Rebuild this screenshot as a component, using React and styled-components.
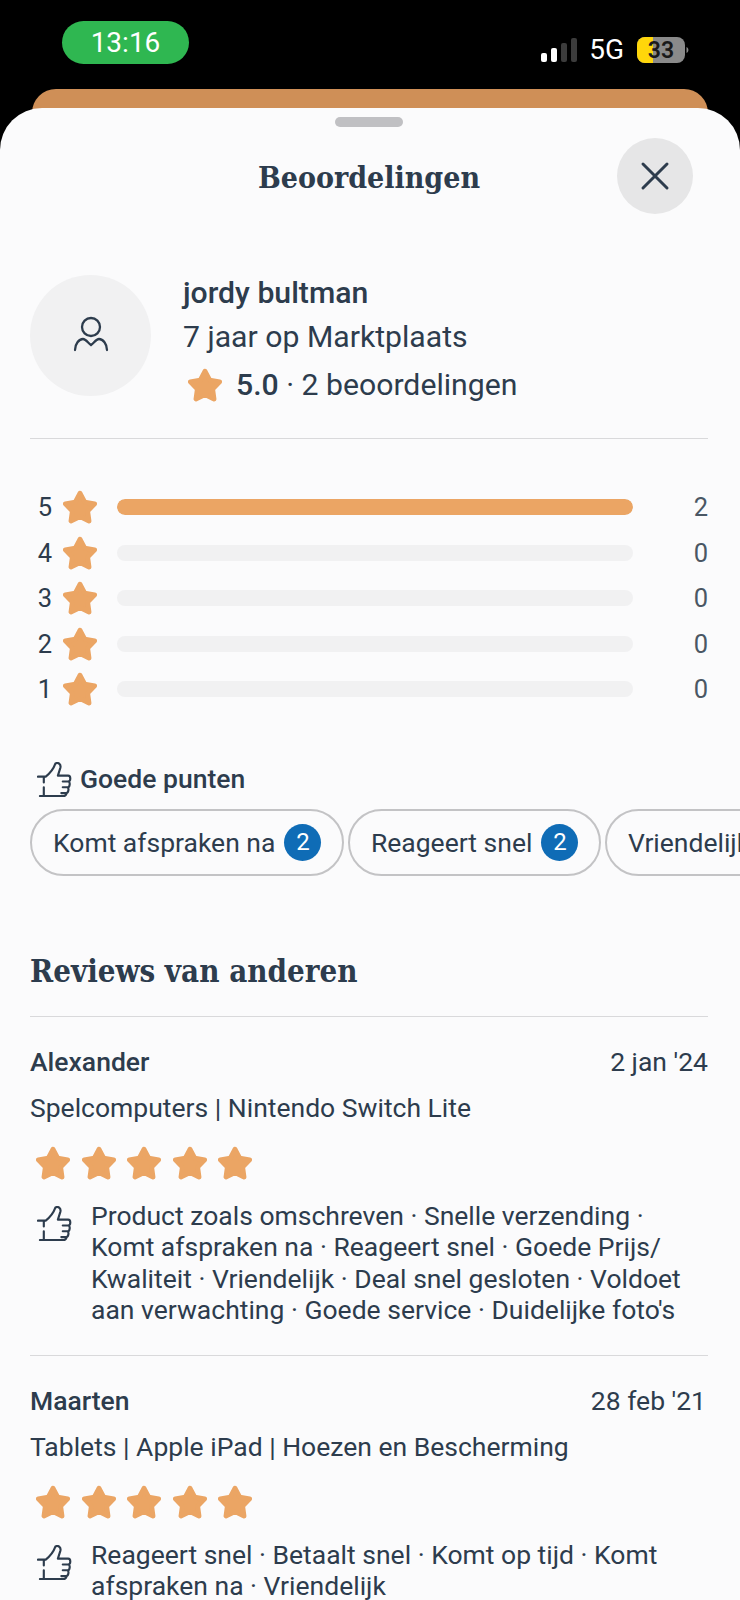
import React from "react";
import styled, { createGlobalStyle } from "styled-components";

const Global = createGlobalStyle`
  html, body { margin: 0; padding: 0; background: #000; }
  body { width: 740px; height: 1600px; overflow: hidden; font-family: Roboto, "Liberation Sans", sans-serif; color: #2d3c4d; }
`;
const Screen = styled.div`width: 740px; height: 1600px; overflow: hidden; background: #000; display: flex; flex-direction: column;`;
const StatusBar = styled.div`height: 89px; flex: none; display: flex; justify-content: space-between; align-items: flex-start; padding: 0 50px 0 62px; box-sizing: border-box;`;
const Clock = styled.div`margin-top: 21px; width: 127px; height: 43px; border-radius: 22px; background: #2fb751; color: #fff; font: 400 28px/43px Roboto, sans-serif; text-align: center;`;
const StatusRight = styled.div`margin-top: 36px; display: flex; align-items: center; height: 28px;`;
const Net = styled.span`color: #fff; font: 400 28px/28px Roboto, sans-serif; margin: 0 13px 0 12px;`;
const BackCard = styled.div`flex: none; height: 40px; margin: 0 32px; background: #cf8f57; border-radius: 24px 24px 0 0;`;
const Sheet = styled.div`flex: 1; margin-top: -21px; position: relative; background: #fbfbfc; border-radius: 42px 42px 0 0; padding: 0 32px 0 30px; overflow: hidden;`;
const Handle = styled.div`width: 68px; height: 10px; border-radius: 5px; background: #c0c0c3; margin: 9px auto 0;`;
const Header = styled.div`height: 102px; margin-top: 3px; display: flex; align-items: center; justify-content: center; position: relative;`;
const Title = styled.h1`margin: 0; font: 700 30px/40px "DejaVu Serif Condensed", "DejaVu Serif", serif; color: #2d3c4d; padding-bottom: 6px;`;
const CloseButton = styled.button`position: absolute; right: 15px; top: 8px; width: 76px; height: 76px; border: 0; border-radius: 50%; background: #e6e6e7; display: flex; align-items: center; justify-content: center; padding: 0;`;
const Profile = styled.section`display: flex; gap: 31px; margin-top: 43px; padding-bottom: 27px; border-bottom: 1px solid #d9d9db;`;
const Avatar = styled.div`width: 121px; height: 121px; flex: none; box-sizing: border-box; padding-bottom: 3px; border-radius: 50%; background: #f1f1f2; display: flex; align-items: center; justify-content: center;`;
const ProfileText = styled.div`display: flex; flex-direction: column; margin: -4px 0 0 1px;`;
const Name = styled.div`font: 500 30.200px/44px Roboto, sans-serif;`;
const Line = styled.div`font: 400 30.200px/43px Roboto, sans-serif;`;
const RatingLine = styled.div`font: 400 30.200px/53px Roboto, sans-serif; display: flex; align-items: center; gap: 14px; margin-left: 5px;`;
const Strong = styled.b`font-weight: 500;`;
const Bars = styled.section`margin-top: 48px; display: flex; flex-direction: column; gap: 5.500px;`;
const BarRow = styled.div`display: grid; grid-template-columns: 22px 65px 516px 1fr; align-items: center; height: 40px; font: 400 25.500px/40px Roboto, sans-serif;`;
const BarNum = styled.span`text-align: right;`;
const StarCell = styled.span`display: flex; padding-left: 11px;`;
const Track = styled.div`height: 16px; border-radius: 8px; background: #f1f1f2; overflow: hidden;`;
const Fill = styled.div`height: 100%; background: #eba564; border-radius: 8px;`;
const Count = styled.span`text-align: right; color: #4a5764;`;
const GoodHead = styled.div`margin-top: 50px; display: flex; align-items: center; gap: 8px; margin-left: 7px; font: 500 26.500px/40px Roboto, sans-serif;`;
const Chips = styled.div`margin-top: 10px; display: flex; gap: 3.500px; margin-right: -32px; overflow: hidden;`;
const Chip = styled.div`flex: none; display: flex; align-items: center; gap: 9px; height: 67px; box-sizing: border-box; padding: 0 21px; border: 2px solid #c3c3c5; border-radius: 33.500px; font: 400 26.500px/32px Roboto, sans-serif;`;
const Badge = styled.span`width: 37px; height: 37px; border-radius: 50%; background: #0f6cb6; color: #fff; font: 400 24px/37px Roboto, sans-serif; text-align: center;`;
const SectionTitle = styled.h2`margin: 75px 0 0; font: 700 31px/40px "DejaVu Serif Condensed", "DejaVu Serif", serif; padding-bottom: 25px; border-bottom: 1px solid #d9d9db;`;
const Review = styled.article`padding: 27px 0 30px; border-bottom: 1px solid #d9d9db; &:last-child { border-bottom: 0; }`;
const ReviewTop = styled.div`display: flex; justify-content: space-between; align-items: center; font: 400 26.500px/36px Roboto, sans-serif;`;
const Author = styled.span`font-weight: 500;`;
const ReviewDate = styled.span`padding-right: ${(p) => p.$inset || 0}px;`;
const Category = styled.div`margin-top: 10px; font: 400 26.500px/36px Roboto, sans-serif;`;
const Stars = styled.div`margin-top: 20px; display: flex; gap: 11.600px; margin-left: 6px;`;
const Tags = styled.div`margin-top: 20px; display: flex; gap: 19px; margin-left: 7px;`;
const ThumbSlot = styled.span`flex: none; padding-top: 6px;`;
const TagText = styled.p`margin: 0; font: 400 26.500px/31.300px Roboto, sans-serif; flex: 1;`;

const Star = () => (
  <svg width="34" height="34" viewBox="2 2 32 32" style={{ flex: "none", display: "block" }}>
    <path d="M18 5 L22.47 13.35 L31.79 15.02 L25.23 21.85 L26.52 31.23 L18 27.1 L9.48 31.23 L10.77 21.85 L4.21 15.02 L13.53 13.35 Z" fill="#eba564" stroke="#eba564" strokeWidth="4.5" strokeLinejoin="round" />
  </svg>
);
const Thumb = () => (
  <svg width="35" height="35" viewBox="0 0 36 36" fill="none" stroke="#2d3c4d" strokeWidth="2.200" strokeLinecap="round" strokeLinejoin="round" style={{ flex: "none", display: "block" }}>
    <path d="M1 15 H9 C13 12 17 7 19 1.500 C22 0 25 2.500 24 6 L21.500 14 H32 C35 14 35 20 32 20 H26.500 M32 20 C34.500 20 34 26 31.500 26 H26.500 M31.500 26 C33 27 32.500 32 30 32 H25 M30 32 C30.500 33 29.500 35 27.500 35 H3 M7 15 V21 M7 26 V35" />
  </svg>
);
const Person = () => (
  <svg width="36" height="36" viewBox="0 0 36 36" fill="none" stroke="#2d3c4d" strokeWidth="2.300" strokeLinecap="round">
    <circle cx="18" cy="11" r="9" />
    <path d="M2 34 C2 28 6 23 10 23 C13 23 15 27 18 29 C21 27 23 23 26 23 C30 23 34 28 34 34" />
  </svg>
);
const Signal = () => (
  <svg width="36" height="24" viewBox="0 0 36 24"><rect x="0" y="15" width="6" height="9" rx="2" fill="#fff"/><rect x="10" y="10" width="6" height="14" rx="2" fill="#fff"/><rect x="20" y="5" width="6" height="19" rx="2" fill="#3c3c3c"/><rect x="30" y="0" width="6" height="24" rx="2" fill="#3c3c3c"/></svg>
);
const Battery = () => (
  <svg width="53" height="26" viewBox="0 0 53 26"><defs><clipPath id="bc"><rect width="48" height="26" rx="8"/></clipPath></defs><g clipPath="url(#bc)"><rect width="48" height="26" fill="#8a8a8a"/><rect width="16" height="26" fill="#ffd60a"/></g><path d="M49.500 10 C52 11 52 15 49.500 16 Z" fill="#8a8a8a"/><text x="24" y="20.500" textAnchor="middle" fontFamily="Roboto, sans-serif" fontWeight="600" fontSize="23" fill="#1a1a1a">33</text></svg>
);

const bars = [[5, 2], [4, 0], [3, 0], [2, 0], [1, 0]];
const reviews = [
  { name: "Alexander", date: "2 jan '24", cat: "Spelcomputers | Nintendo Switch Lite", tags: ["Product zoals omschreven · Snelle verzending ·", "Komt afspraken na · Reageert snel · Goede Prijs/", "Kwaliteit · Vriendelijk · Deal snel gesloten · Voldoet", "aan verwachting · Goede service · Duidelijke foto's"] },
  { name: "Maarten", date: "28 feb '21", inset: 2, cat: "Tablets | Apple iPad | Hoezen en Bescherming", tags: ["Reageert snel · Betaalt snel · Komt op tijd · Komt", "afspraken na · Vriendelijk"] },
];

export default function App() {
  return (
    <Screen>
      <Global />
      <StatusBar>
        <Clock>13:16</Clock>
        <StatusRight><Signal /><Net>5G</Net><Battery /></StatusRight>
      </StatusBar>
      <BackCard />
      <Sheet>
        <Handle />
        <Header>
          <Title>Beoordelingen</Title>
          <CloseButton aria-label="Sluiten">
            <svg width="32" height="32" viewBox="0 0 32 32" stroke="#2d3c4d" strokeWidth="3" strokeLinecap="round"><path d="M4 4 L28 28 M28 4 L4 28" /></svg>
          </CloseButton>
        </Header>
        <Profile>
          <Avatar><Person /></Avatar>
          <ProfileText>
            <Name>jordy bultman</Name>
            <Line>7 jaar op Marktplaats</Line>
            <RatingLine><Star /><span><Strong>5.0</Strong> · 2 beoordelingen</span></RatingLine>
          </ProfileText>
        </Profile>
        <Bars>
          {bars.map(([n, c]) => (
            <BarRow key={n}>
              <BarNum>{n}</BarNum>
              <StarCell><Star /></StarCell>
              <Track>{c > 0 && <Fill style={{ width: "100%" }} />}</Track>
              <Count>{c}</Count>
            </BarRow>
          ))}
        </Bars>
        <GoodHead><Thumb />Goede punten</GoodHead>
        <Chips>
          <Chip>Komt afspraken na<Badge>2</Badge></Chip>
          <Chip>Reageert snel<Badge>2</Badge></Chip>
          <Chip>Vriendelijk<Badge>2</Badge></Chip>
        </Chips>
        <SectionTitle>Reviews van anderen</SectionTitle>
        {reviews.map((r) => (
          <Review key={r.name}>
            <ReviewTop><Author>{r.name}</Author><ReviewDate $inset={r.inset}>{r.date}</ReviewDate></ReviewTop>
            <Category>{r.cat}</Category>
            <Stars>{[0, 1, 2, 3, 4].map((i) => <Star key={i} />)}</Stars>
            <Tags><ThumbSlot><Thumb /></ThumbSlot><TagText>{r.tags.map((t, i) => <React.Fragment key={i}>{t}{i < r.tags.length - 1 && <br />}</React.Fragment>)}</TagText></Tags>
          </Review>
        ))}
      </Sheet>
    </Screen>
  );
}
